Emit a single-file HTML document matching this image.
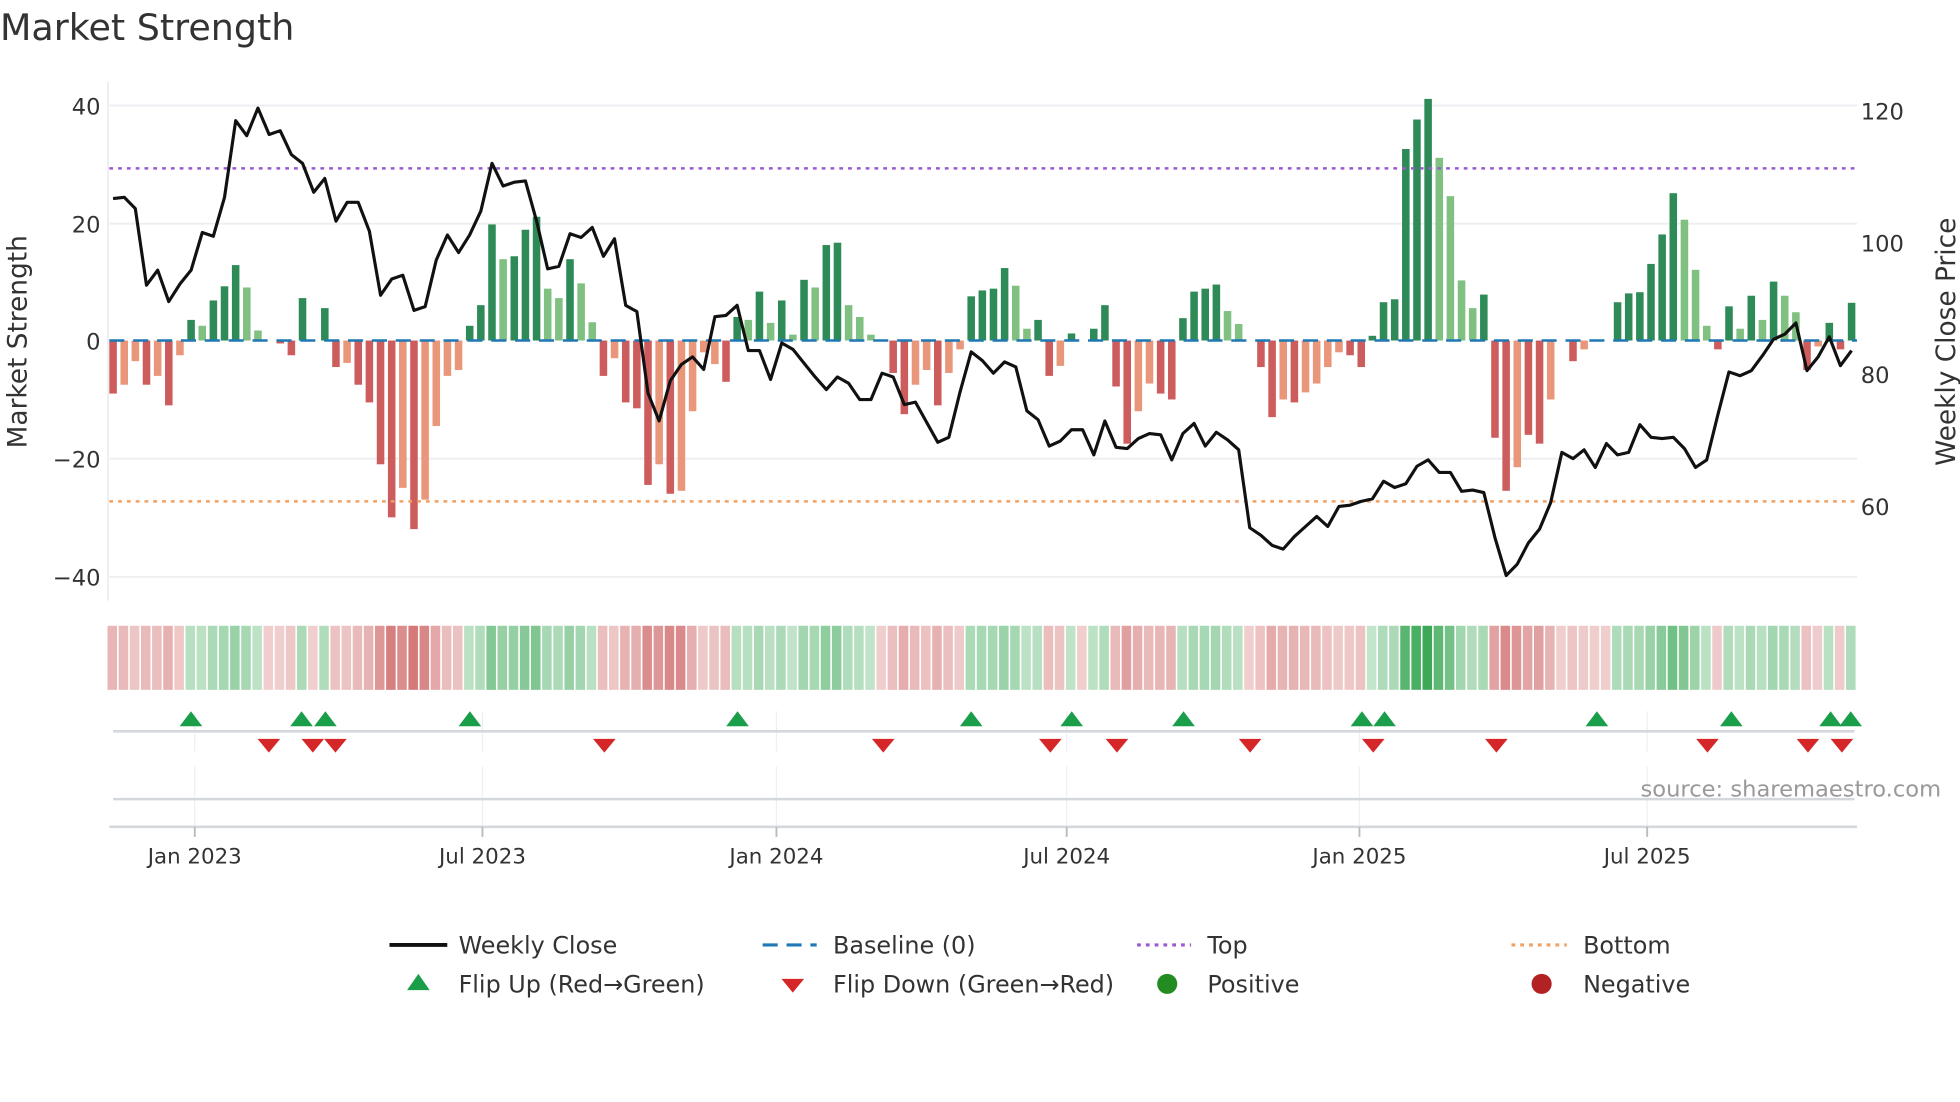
<!DOCTYPE html>
<html><head><meta charset="utf-8"><style>
html,body{margin:0;padding:0;background:#fff;width:1960px;height:1102px;overflow:hidden}
svg{display:block}
text{font-family:"DejaVu Sans","Liberation Sans",sans-serif;fill:#333}
</style></head><body>
<svg id="s" width="1960" height="1102" viewBox="0 0 1560 877" preserveAspectRatio="none" xmlns="http://www.w3.org/2000/svg">
<text x="0" y="32" font-size="29" fill="#333">Market Strength</text>
<g stroke="#eceef1" stroke-width="1.5">
<line x1="87" y1="84" x2="1478" y2="84"/><line x1="87" y1="178" x2="1478" y2="178"/>
<line x1="87" y1="365" x2="1478" y2="365"/><line x1="87" y1="459" x2="1478" y2="459"/>
</g>
<line x1="86" y1="65" x2="86" y2="478" stroke="#eceef1" stroke-width="1.5"/>
<g font-size="18" text-anchor="end">
<text x="80" y="91">40</text><text x="80" y="185">20</text><text x="80" y="278">0</text>
<text x="80" y="372">−20</text><text x="80" y="466">−40</text>
</g>
<g font-size="18">
<text x="1481" y="95">120</text><text x="1481" y="200">100</text><text x="1481" y="305">80</text><text x="1481" y="410">60</text>
</g>
<text transform="translate(21,272) rotate(-90)" font-size="21" text-anchor="middle">Market Strength</text>
<text transform="translate(1556,272) rotate(-90)" font-size="21" text-anchor="middle">Weekly Close Price</text>
<g id="bars"></g>
<line x1="87" y1="271" x2="1478" y2="271" stroke="#1f77b4" stroke-width="2" stroke-dasharray="12,7"/>
<line x1="87" y1="134" x2="1478" y2="134" stroke="#9b59d0" stroke-width="2" stroke-dasharray="3,4"/>
<line x1="87" y1="399" x2="1478" y2="399" stroke="#f0a060" stroke-width="2" stroke-dasharray="3,4"/>
<polyline id="price" fill="none" stroke="#111" stroke-width="2.5" stroke-linejoin="round"/>
<g id="strip"></g>
<g stroke="#edf0f3" stroke-width="1">
<line x1="155" y1="566" x2="155" y2="598"/><line x1="384" y1="566" x2="384" y2="598"/><line x1="618" y1="566" x2="618" y2="598"/><line x1="849" y1="566" x2="849" y2="598"/><line x1="1082" y1="566" x2="1082" y2="598"/><line x1="1311" y1="566" x2="1311" y2="598"/>
<line x1="155" y1="610" x2="155" y2="658"/><line x1="384" y1="610" x2="384" y2="658"/><line x1="618" y1="610" x2="618" y2="658"/><line x1="849" y1="610" x2="849" y2="658"/><line x1="1082" y1="610" x2="1082" y2="658"/><line x1="1311" y1="610" x2="1311" y2="658"/>
</g>
<line x1="90" y1="582" x2="1476" y2="582" stroke="#d4d8dd" stroke-width="2"/>
<line x1="90" y1="636" x2="1476" y2="636" stroke="#d4d8dd" stroke-width="2"/>
<line x1="87" y1="658" x2="1478" y2="658" stroke="#d4d8dd" stroke-width="2"/>
<g id="marks"></g>
<g stroke="#bbb" stroke-width="1.5">
<line x1="155" y1="658" x2="155" y2="666"/><line x1="384" y1="658" x2="384" y2="666"/><line x1="618" y1="658" x2="618" y2="666"/><line x1="849" y1="658" x2="849" y2="666"/><line x1="1082" y1="658" x2="1082" y2="666"/><line x1="1311" y1="658" x2="1311" y2="666"/>
</g>
<g font-size="17" text-anchor="middle">
<text x="155" y="687">Jan 2023</text><text x="384" y="687">Jul 2023</text><text x="618" y="687">Jan 2024</text><text x="849" y="687">Jul 2024</text><text x="1082" y="687">Jan 2025</text><text x="1311" y="687">Jul 2025</text>
</g>
<text x="1545" y="634" font-size="18" text-anchor="end" fill="#999" style="fill:#999">source: sharemaestro.com</text>
<g font-size="19">
<line x1="310" y1="752" x2="356" y2="752" stroke="#111" stroke-width="3"/><text x="365" y="759">Weekly Close</text>
<line x1="607" y1="752" x2="650" y2="752" stroke="#1f77b4" stroke-width="2.5" stroke-dasharray="12,7"/><text x="663" y="759">Baseline (0)</text>
<line x1="905" y1="752" x2="948" y2="752" stroke="#9b59d0" stroke-width="2.5" stroke-dasharray="3,4"/><text x="961" y="759">Top</text>
<line x1="1203" y1="752" x2="1247" y2="752" stroke="#f0a060" stroke-width="2.5" stroke-dasharray="3,4"/><text x="1260" y="759">Bottom</text>
<polygon points="324,788 342,788 333,775" fill="#1a9e4a"/><text x="365" y="790">Flip Up (Red→Green)</text>
<polygon points="622,779 640,779 631,790" fill="#d62728"/><text x="663" y="790">Flip Down (Green→Red)</text>
<circle cx="929" cy="783" r="8" fill="#228b22"/><text x="961" y="790">Positive</text>
<circle cx="1227" cy="783" r="8" fill="#b22222"/><text x="1260" y="790">Negative</text>
</g>
</svg>
<script>
var V=[[-9,1],[-7.5,0],[-3.5,0],[-7.5,1],[-6,0],[-11,1],[-2.5,0],[3.5,1],[2.5,0],[6.8,1],[9.2,1],[12.8,1],[9,0],[1.7,0],[0,1],[-0.5,1],[-2.5,1],[7.2,1],[0,1],[5.5,1],
[-4.5,1],[-3.8,0],[-7.5,1],[-10.5,1],[-21,1],[-30,1],[-25,0],[-32,1],[-27,0],[-14.5,0],[-6,0],[-5,0],[2.5,1],[6,1],[19.7,1],[13.8,0],[14.3,1],[18.8,1],[21,1],[8.8,0],
[7.2,0],[13.8,1],[9.7,0],[3.1,0],[-6,1],[-3,0],[-10.5,1],[-11.5,1],[-24.5,1],[-21,0],[-26,1],[-25.5,0],[-12,0],[-2,0],[-4,0],[-7,1],[4,1],[3.5,0],[8.3,1],[3,0],
[6.8,1],[1,0],[10.3,1],[9,0],[16.2,1],[16.6,1],[6,0],[4,0],[1,0],[0,1],[-5.5,1],[-12.5,1],[-7.5,0],[-5,0],[-11,1],[-5.5,0],[-1.5,0],[7.5,1],[8.5,1],[8.8,1],
[12.3,1],[9.3,0],[2,0],[3.5,1],[-6,1],[-4.3,0],[1.2,1],[0,1],[2,1],[6,1],[-7.8,1],[-17.5,1],[-12,0],[-7.3,0],[-9,1],[-10,1],[3.8,1],[8.3,1],[8.8,1],[9.5,1],
[5,0],[2.8,0],[0,1],[-4.5,1],[-13,1],[-10,0],[-10.5,1],[-8.8,0],[-7.3,0],[-4.5,0],[-2,0],[-2.5,1],[-4.5,1],[0.8,1],[6.5,1],[7,1],[32.5,1],[37.5,1],[41,1],[31,0],
[24.5,0],[10.2,0],[5.5,0],[7.8,1],[-16.5,1],[-25.5,1],[-21.5,0],[-16,1],[-17.5,1],[-10,0],[0,1],[-3.5,1],[-1.5,0],[0,1],[0,1],[6.5,1],[8,1],[8.2,1],[13,1],[18,1],
[25,1],[20.5,0],[12,0],[2.5,0],[-1.5,1],[5.8,1],[2,0],[7.6,1],[3.5,0],[10,1],[7.6,0],[4.8,0],[-5,1],[-1,0],[3,1],[-1.5,1],[6.4,1]];
var P=[158,157,166,227,215,240,226,215,185,188,157,96,108,86,107,104,123,130,153,142,176,161,161,184,235,222,219,247,244,207,187,201,187,168,130,148,145,144,176,214,
212,186,189,181,204,190,243,248,313,335,303,290,284,294,252,251,243,279,279,302,273,278,289,300,310,300,305,318,318,297,300,322,320,336,352,348,312,280,287,297,
288,292,327,334,355,351,342,342,362,335,356,357,349,345,346,366,345,337,355,344,350,358,420,426,434,437,427,419,411,419,403,402,399,397,383,388,385,371,366,376,
376,391,390,392,428,458,449,432,421,400,360,365,358,372,353,362,360,338,348,349,348,357,372,366,330,296,299,295,283,270,266,257,295,284,268,291,279];
var NS="http://www.w3.org/2000/svg";
function el(t,a,p){var e=document.createElementNS(NS,t);for(var k in a)e.setAttribute(k,a[k]);document.getElementById(p).appendChild(e);}
var bx=function(i){return 90+8.87*i;};
V.forEach(function(d,i){var v=d[0],x=bx(i);if(v!==0){var h=Math.abs(v)*4.69;var c=v>0?(d[1]?"#2e8b57":"#80c080"):(d[1]?"#cd5c5c":"#e9967a");
el("rect",{x:x-3,y:v>0?271-h:271,width:6,height:Math.max(h,1),fill:c},"bars");}
var a=0.28+0.62*Math.min(Math.abs(v)/41,1);if(Math.abs(v)<1)a=0.28;
var col=v>0?"rgba(40,160,70,"+a+")":"rgba(200,80,80,"+a+")";
el("rect",{x:x-4.44,y:498,width:7.6,height:51,fill:col},"strip");});
document.getElementById("price").setAttribute("points",P.map(function(y,i){return bx(i).toFixed(1)+","+y;}).join(" "));
[152,240,259,374,587,773,853,942,1084,1102,1271,1378,1457,1473].forEach(function(x){el("polygon",{points:(x-9)+",578 "+(x+9)+",578 "+x+",566",fill:"#1a9e4a"},"marks");});
[214,249,267,481,703,836,889,995,1093,1191,1359,1439,1466].forEach(function(x){el("polygon",{points:(x-9)+",588 "+(x+9)+",588 "+x+",599",fill:"#d62728"},"marks");});
</script>
</body></html>
